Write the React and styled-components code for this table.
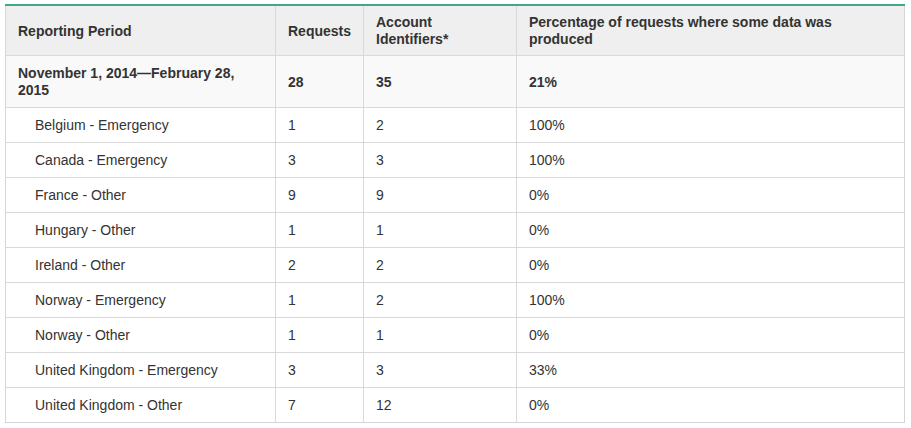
import styled, { createGlobalStyle } from 'styled-components';

const GlobalStyle = createGlobalStyle`
  body {
    margin: 0;
    background: #fff;
    font-family: "Liberation Sans", Arial, sans-serif;
  }
`;

const Wrap = styled.div`
  padding: 4px 6px 0 5px;
`;

const Table = styled.table`
  width: 900px;
  border-collapse: collapse;
  table-layout: fixed;
  border: 1px solid #d6d6d6;
  border-top: 2px solid #3da88d;
  font-size: 14px;
  color: #333;
`;

const Head = styled.th`
  background: #efefef;
  text-align: left;
  vertical-align: middle;
  font-weight: bold;
  font-size: 14px;
  line-height: 17px;
  padding: 8px 12px 7px;
  border-left: 1px solid #d9d9d9;
  border-bottom: 1px solid #d9d9d9;
  &:first-child { border-left: none; }
`;

const Cell = styled.td`
  vertical-align: middle;
  line-height: 17px;
  padding: 9px 12px 8px;
  padding-left: ${p => (p.$indent ? '29px' : '12px')};
  border-left: 1px solid #d9d9d9;
  border-top: 1px solid #d9d9d9;
  font-weight: ${p => (p.$bold ? 'bold' : 'normal')};
  &:first-child { border-left: none; }
`;

const Row = styled.tr`
  background: ${p => (p.$total ? '#f9f9f9' : '#fff')};
`;

const rows = [
  ['Belgium - Emergency', '1', '2', '100%'],
  ['Canada - Emergency', '3', '3', '100%'],
  ['France - Other', '9', '9', '0%'],
  ['Hungary - Other', '1', '1', '0%'],
  ['Ireland - Other', '2', '2', '0%'],
  ['Norway - Emergency', '1', '2', '100%'],
  ['Norway - Other', '1', '1', '0%'],
  ['United Kingdom - Emergency', '3', '3', '33%'],
  ['United Kingdom - Other', '7', '12', '0%'],
];

export default function App() {
  return (
    <Wrap>
      <GlobalStyle />
      <Table>
        <colgroup>
          <col style={{ width: 270 }} />
          <col style={{ width: 88 }} />
          <col style={{ width: 153 }} />
          <col />
        </colgroup>
        <thead>
          <tr>
            <Head>Reporting Period</Head>
            <Head>Requests</Head>
            <Head>Account Identifiers*</Head>
            <Head>Percentage of requests where some data was produced</Head>
          </tr>
        </thead>
        <tbody>
          <Row $total>
            <Cell $bold>November 1, 2014—February 28, 2015</Cell>
            <Cell $bold>28</Cell>
            <Cell $bold>35</Cell>
            <Cell $bold>21%</Cell>
          </Row>
          {rows.map(r => (
            <Row key={r[0]}>
              <Cell $indent>{r[0]}</Cell>
              <Cell>{r[1]}</Cell>
              <Cell>{r[2]}</Cell>
              <Cell>{r[3]}</Cell>
            </Row>
          ))}
        </tbody>
      </Table>
    </Wrap>
  );
}
